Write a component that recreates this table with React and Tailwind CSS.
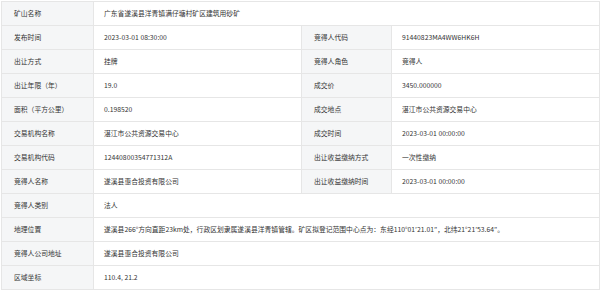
import React from 'react';

const rows = [
  { l1: '矿山名称', v1: '广东省遂溪县洋青镇满仔塘村矿区建筑用砂矿' },
  { l1: '发布时间', v1: '2023-03-01 08:30:00', l2: '竞得人代码', v2: '91440823MA4WW6HK6H' },
  { l1: '出让方式', v1: '挂牌', l2: '竞得人角色', v2: '竞得人' },
  { l1: '出让年限（年）', v1: '19.0', l2: '成交价', v2: '3450.000000' },
  { l1: '面积（平方公里）', v1: '0.198520', l2: '成交地点', v2: '湛江市公共资源交易中心' },
  { l1: '交易机构名称', v1: '湛江市公共资源交易中心', l2: '成交时间', v2: '2023-03-01 00:00:00' },
  { l1: '交易机构代码', v1: '12440800354771312A', l2: '出让收益缴纳方式', v2: '一次性缴纳' },
  { l1: '竞得人名称', v1: '遂溪县惠合投资有限公司', l2: '出让收益缴纳时间', v2: '2023-03-01 00:00:00' },
  { l1: '竞得人类别', v1: '法人' },
  {
    l1: '地理位置',
    v1: '遂溪县266°方向直距23km处，行政区划隶属遂溪县洋青镇管辖。矿区拟登记范围中心点为：东经110°01′21.01″，北纬21°21′53.64″。',
  },
  { l1: '竞得人公司地址', v1: '遂溪县惠合投资有限公司' },
  { l1: '区域坐标', v1: '110.4, 21.2' },
];

const labelCls = 'border border-[#e6e6e6] bg-[#f5f6f7] pl-[12px] h-[24px] whitespace-nowrap';
const valueCls = 'border border-[#e6e6e6] bg-white pl-[10px] h-[24px] whitespace-nowrap';

const App = () => {
  return (
    <div
      className="bg-white w-[600px] h-[291px] pt-[1px] pl-[1px] text-[#333] text-[6.8px] leading-none"
      style={{ fontFamily: '"Noto Sans CJK SC", "Noto Sans", sans-serif' }}
    >
      <table className="border-collapse w-[598px] table-fixed">
        <colgroup>
          <col className="w-[92px]" />
          <col className="w-[208px]" />
          <col className="w-[90px]" />
          <col className="w-[208px]" />
        </colgroup>
        <tbody>
          {rows.map((r) => (
            <tr key={r.l1} className="h-[24px]">
              <td className={labelCls}>{r.l1}</td>
              {r.l2 ? (
                <>
                  <td className={valueCls}>{r.v1}</td>
                  <td className={labelCls + ' pl-[11px]'}>{r.l2}</td>
                  <td className={valueCls}>{r.v2}</td>
                </>
              ) : (
                <td colSpan={3} className={valueCls}>
                  {r.v1}
                </td>
              )}
            </tr>
          ))}
        </tbody>
      </table>
    </div>
  );
};

export default App;
